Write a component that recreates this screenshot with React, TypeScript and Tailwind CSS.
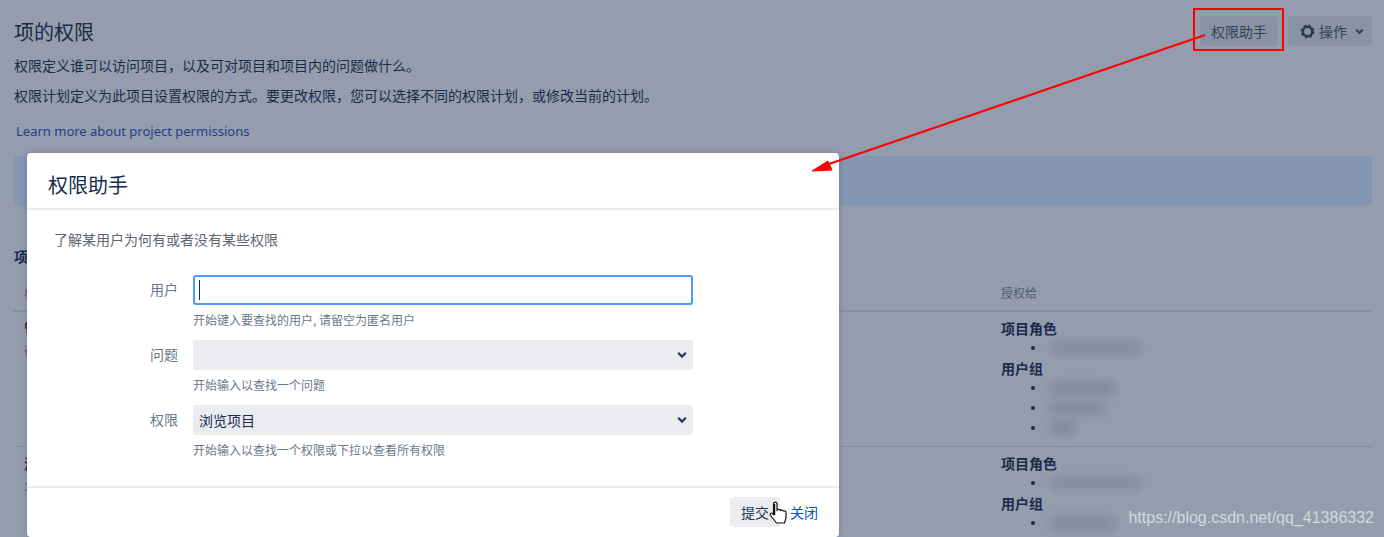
const cjk = "font-['Microsoft_YaHei','Noto_Sans_CJK_SC','Noto_Sans',sans-serif]";

const Chevron = ({ className }: { className: string }) => (
  <svg viewBox="0 0 10 8" className={className} fill="none" stroke="currentColor" strokeWidth="2.2">
    <path d="M1.2 1.8 5 5.6l3.8-3.8" />
  </svg>
);

const Cog = () => (
  <svg viewBox="0 0 16 16" className="size-[15px]" fill="none" stroke="#2a3856">
    <circle cx="8" cy="8" r="5" strokeWidth="2.6" />
    <circle cx="8" cy="8" r="6.6" strokeWidth="1.6" strokeDasharray="2.6 2.6" />
  </svg>
);

const Blurred = ({ className }: { className: string }) => (
  <div className={`rounded-sm bg-[#838c9f] blur-[5px] ${className}`} />
);

const Grants = ({ groups }: { groups: string[] }) => (
  <div className="flex flex-col text-[14px] leading-[20px] text-[#1c2a4b]">
    <div className="font-bold">项目角色</div>
    <div className="flex h-[20px] items-center pl-[30px]">
      <span className="size-[4px] rounded-full bg-[#1c2a4b]" />
      <Blurred className="ml-[16px] h-[12px] w-[90px]" />
    </div>
    <div className="font-bold">用户组</div>
    {groups.map((w) => (
      <div key={w} className="flex h-[20px] items-center pl-[30px]">
        <span className="size-[4px] rounded-full bg-[#1c2a4b]" />
        <Blurred
          className={`ml-[16px] h-[14px] ${w === "a" ? "w-[64px]" : w === "b" ? "w-[54px]" : "w-[24px]"}`}
        />
      </div>
    ))}
  </div>
);

const PermissionName = ({ title, desc }: { title: string; desc: string }) => (
  <div className="w-[987px] pl-[10px]">
    <div className="text-[14px] font-bold leading-[20px]">{title}</div>
    <div className="mt-[2px] text-[12px] leading-[20px] text-[#4f5a76]">{desc}</div>
  </div>
);

const Field = ({ label, hint, children }: { label: string; hint: string; children: React.ReactNode }) => (
  <div className="flex gap-[15px]">
    <div className="w-[124px] pt-[4px] text-right text-[14px] leading-[20px] text-[#6b778c]">{label}</div>
    <div className="flex w-[500px] flex-col">
      {children}
      <div className="mt-[6px] h-[29px] text-[12px] leading-[18px] text-[#6b778c]">{hint}</div>
    </div>
  </div>
);

const FakeSelect = ({ value }: { value?: string }) => (
  <div className="flex h-[30px] items-center justify-between rounded-[3px] bg-[#ebecf0] pl-[6px] pr-[6px] text-[14px] text-[#172b4d]">
    <span>{value}</span>
    <Chevron className="h-[8px] w-[10px] text-[#253858]" />
  </div>
);

const Dialog = () => (
  <div className="absolute left-[27px] top-[153px] flex h-[384px] w-[812px] flex-col rounded-[4px] bg-white shadow-[0_0_6px_rgba(23,43,77,0.25)]">
    <div className="flex h-[57px] shrink-0 items-center border-b-2 border-[#e9ebef] pl-[21px] pt-[8px] text-[20px] text-[#172b4d]">
      权限助手
    </div>
    <div className="h-[278px] shrink-0 border-b-2 border-[#e9ebef] pl-[27px]">
      <p className="pt-[19px] text-[14px] leading-[20px] text-[#5f6670]">了解某用户为何有或者没有某些权限</p>
      <div className="mt-[26px] flex flex-col">
        <Field label="用户" hint="开始键入要查找的用户, 请留空为匿名用户">
          <div className="flex h-[30px] items-center rounded-[3px] border-2 border-[#4c9aff] pl-[4px]">
            <div className="h-[20px] w-px bg-[#172b4d]" />
          </div>
        </Field>
        <Field label="问题" hint="开始输入以查找一个问题">
          <FakeSelect />
        </Field>
        <Field label="权限" hint="开始输入以查找一个权限或下拉以查看所有权限">
          <FakeSelect value="浏览项目" />
        </Field>
      </div>
    </div>
    <div className="flex flex-1 items-start justify-end gap-[10px] pr-[21px] pt-[9px] text-[14px]">
      <div className="flex h-[30px] w-[50px] items-center rounded-[3px] bg-[#ebecf0] pl-[11px] text-[#253858]">提交</div>
      <a className="flex h-[30px] items-center text-[#0052cc]">关闭</a>
    </div>
  </div>
);

const Annotations = () => (
  <svg viewBox="0 0 1384 537" className="pointer-events-none absolute inset-0 size-full">
    <rect x="1194" y="9" width="89" height="41" fill="none" stroke="#ff0000" strokeWidth="2" />
    <path d="M1205 35 826 165" stroke="#ff0000" strokeWidth="2" fill="none" />
    <path d="M812 171 828 161 832 170Z" fill="#ff0000" stroke="#ff0000" strokeWidth="1" />
    <path
      d="M773.500 504c0-2.500 3.500-2.500 3.500 0v6c1-1 3-1 3.500.5 1-1 2.500-.5 3 .5 1-.5 2.500 0 2.500 1.500v5.500l-1.500 5h-8l-6-7.500c-1-2 1-3 2-2l1 1Z"
      fill="#fff"
      stroke="#111"
      strokeWidth="1.200"
    />
    <path d="M774.500 504v11" stroke="#111" strokeWidth="1.500" fill="none" />
  </svg>
);

export default function App() {
  return (
    <div className={`relative h-[537px] w-[1384px] overflow-hidden bg-[#949dae] ${cjk}`}>
      <div className="flex flex-col pl-[14px] pr-[12px] text-[#1c2a4b]">
        <div className="flex items-start justify-between pt-[16px]">
          <h1 className="pt-[2px] text-[20px] leading-[28px] text-[#1c2a4b]">项的权限</h1>
          <div className="flex gap-[10px] text-[14px] text-[#33415f]">
            <div className="flex h-[30px] w-[78px] items-center justify-center rounded-[3px] bg-[#8a92a5]">权限助手</div>
            <div className="flex h-[30px] w-[84px] items-center gap-[4px] rounded-[3px] bg-[#8a92a5] pl-[12px]">
              <Cog />
              <span>操作</span>
              <Chevron className="ml-[4px] h-[7px] w-[9px] text-[#2a3856]" />
            </div>
          </div>
        </div>
        <p className="mt-[9px] text-[14px] leading-[20px]">权限定义谁可以访问项目，以及可对项目和项目内的问题做什么。</p>
        <p className="mt-[10px] text-[14px] leading-[20px]">
          权限计划定义为此项目设置权限的方式。要更改权限，您可以选择不同的权限计划，或修改当前的计划。
        </p>
        <a className="mt-[16px] pl-[2px] font-['Noto_Sans',sans-serif] text-[13px] leading-[20px] text-[#1f3f86]">
          Learn more about project permissions
        </a>
        <div className="mt-[15px] h-[50px] rounded-[3px] bg-[#8496b2]" />
        <div className="mt-[40px] text-[14px] font-bold leading-[20px]">项目权限</div>
        <div className="mt-[17px] flex h-[29px] border-b-2 border-[#868fa1] text-[12px] leading-[20px] text-[#4f5a76]">
          <span className="w-[987px] pl-[10px]">权限</span>
          <span>授权给</span>
        </div>
        <div className="flex h-[135px] border-b border-[#868fa1] pt-[6px]">
          <PermissionName title="管理" desc="在项目中" />
          <Grants groups={["a", "b", "c"]} />
        </div>
        <div className="flex pt-[6px]">
          <PermissionName title="添加" desc="允许" />
          <Grants groups={["a"]} />
        </div>
      </div>
      <Dialog />
      <Annotations />
      <div className="absolute bottom-[9px] right-[10px] font-['Liberation_Sans',sans-serif] text-[16px] leading-[20px] text-white/60">
        https://blog.csdn.net/qq_41386332
      </div>
    </div>
  );
}
